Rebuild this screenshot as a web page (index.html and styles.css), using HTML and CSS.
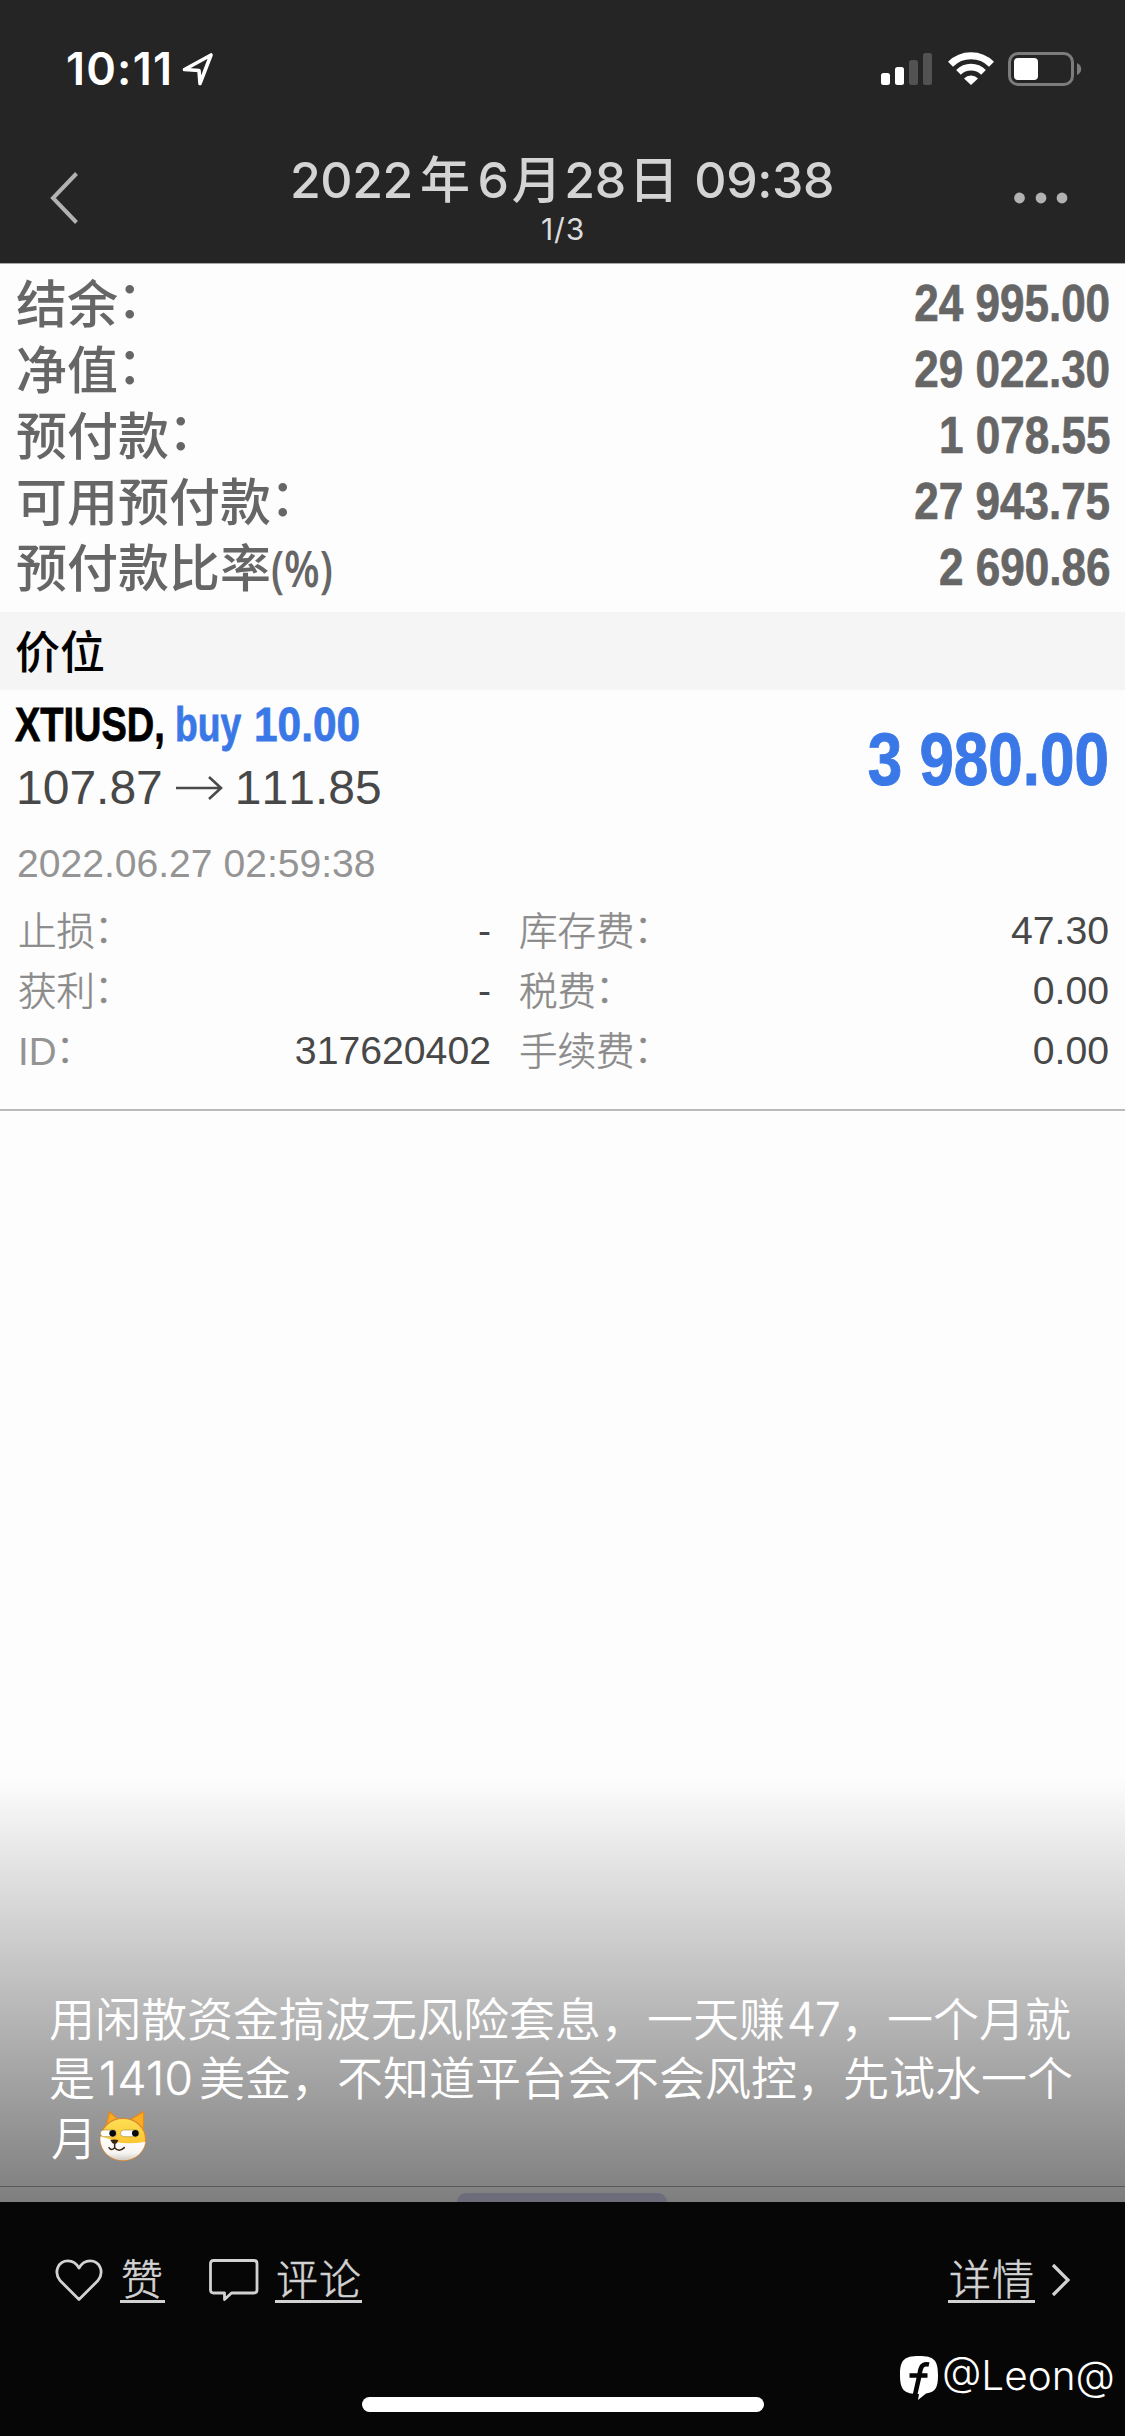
FILE: index.html
```html
<!DOCTYPE html>
<html lang="zh-CN">
<head>
<meta charset="utf-8">
<title>2022年6月28日 09:38</title>
<link rel="stylesheet" href="styles.css">
</head>
<body>
<div class="screen">
  <header class="header">
    <div class="status">
      <div class="status-left">
        <span class="clock">10:11</span>
        <svg class="location" viewBox="0 0 32 34" width="32" height="34"><path d="M2.5 17.5 L29 3 L18 31.5 L17 18.5 Z" fill="none" stroke="#fff" stroke-width="3.6" stroke-linejoin="round"/></svg>
      </div>
      <div class="status-right">
        <svg width="52" height="34" viewBox="0 0 52 34"><g fill="#fff"><rect x="0" y="21" width="9" height="12" rx="2.5"/><rect x="14" y="15" width="9" height="18" rx="2.5"/></g><g fill="#525252"><rect x="28" y="8" width="9" height="25" rx="2.5"/><rect x="42" y="1" width="9" height="32" rx="2.5"/></g></svg>
        <svg width="46" height="34" viewBox="0 0 46 34"><g fill="none" stroke="#fff"><path d="M2.5 12.2 A29 29 0 0 1 43.5 12.2" stroke-width="7"/><path d="M10.5 20.3 A17.7 17.7 0 0 1 35.5 20.3" stroke-width="6.6"/></g><path d="M23 33 L16 26.4 A10 10 0 0 1 30 26.4 Z" fill="#fff"/></svg>
        <svg width="74" height="34" viewBox="0 0 74 34"><rect x="1.5" y="1.5" width="63" height="31" rx="8.5" fill="none" stroke="#7c7c7c" stroke-width="3"/><rect x="6" y="6" width="24" height="22" rx="4" fill="#fff"/><path d="M69 11 Q73.2 13 73.2 17 Q73.2 21 69 23 Z" fill="#7c7c7c"/></svg>
      </div>
    </div>
    <div class="nav">
      <svg class="back" width="30" height="54" viewBox="0 0 30 54"><path d="M26.500 2.500 L3 27 L26.500 51.500" fill="none" stroke="#b2b2b2" stroke-width="4"/></svg>
      <div class="heading">
        <div class="title">2022<span class="gap">年</span>6<span class="gap-s">月</span>28<span class="gap-s">日</span> 09:38</div>
        <div class="count">1/3</div>
      </div>
      <svg class="more" width="54" height="12" viewBox="0 0 54 12"><g fill="#b2b2b2"><circle cx="5.5" cy="6" r="5.4"/><circle cx="27" cy="6" r="5.4"/><circle cx="48" cy="6" r="5.4"/></g></svg>
    </div>
  </header>

  <main class="photo">
    <section class="summary">
      <div class="row"><span class="label">结余<span class="colon">：</span></span><span class="num">24 995.00</span></div>
      <div class="row"><span class="label">净值<span class="colon">：</span></span><span class="num">29 022.30</span></div>
      <div class="row"><span class="label">预付款<span class="colon">：</span></span><span class="num">1 078.55</span></div>
      <div class="row"><span class="label">可用预付款<span class="colon">：</span></span><span class="num">27 943.75</span></div>
      <div class="row"><span class="label">预付款比率<span class="pct">(%)</span></span><span class="num">2 690.86</span></div>
    </section>
    <h2 class="band">价位</h2>
    <section class="trade">
      <div class="trade-top">
        <div class="deal">
          <div class="symbol"><span class="sym">XTIUSD,</span><span class="buy">buy</span><span class="lots">10.00</span></div>
          <div class="prices"><span>107.87</span><svg width="48" height="26" viewBox="0 0 48 26"><path d="M1 13 H46 M34 2 L46 13 L34 24" fill="none" stroke="#4a4a4a" stroke-width="2.6"/></svg><span>111.85</span></div>
        </div>
        <div class="profit">3 980.00</div>
      </div>
      <div class="date">2022.06.27 02:59:38</div>
      <div class="details">
        <span class="k">止损<span class="colon">：</span></span><span class="v">-</span><span class="k second">库存费<span class="colon">：</span></span><span class="v">47.30</span>
        <span class="k">获利<span class="colon">：</span></span><span class="v">-</span><span class="k second">税费<span class="colon">：</span></span><span class="v">0.00</span>
        <span class="k"><span class="latin">ID</span><span class="colon">：</span></span><span class="v">317620402</span><span class="k second">手续费<span class="colon">：</span></span><span class="v">0.00</span>
      </div>
    </section>
    <div class="blank"></div>
    <section class="caption">
      <p class="caption-text">用闲散资金搞波无风险套息，一天赚<span class="d47">47</span>，一个月就<br>是<span class="d1410">1410</span>美金，不知道平台会不会风控，先试水一个<br><span class="moon">月</span><svg class="doge" width="50" height="52" viewBox="0 0 150 156">
        <defs>
          <linearGradient id="fur" x1="0" y1="0" x2="0" y2="1"><stop offset="0" stop-color="#ffdf55"/><stop offset="1" stop-color="#f9b51c"/></linearGradient>
          <linearGradient id="muzzle" x1="0" y1="0" x2="0" y2="1"><stop offset="0" stop-color="#fff"/><stop offset=".65" stop-color="#f7f5f2"/><stop offset="1" stop-color="#c9c2bb"/></linearGradient>
          <clipPath id="head"><ellipse cx="78" cy="88" rx="68" ry="63"/></clipPath>
        </defs>
        <path d="M27 48 L38 6 L66 30 Z M98 30 L140 5 L139 60 Z" fill="#f9ae22" stroke="#e68a22" stroke-width="4" stroke-linejoin="round"/>
        <ellipse cx="78" cy="88" rx="68" ry="63" fill="url(#fur)" stroke="#d98734" stroke-width="4"/>
        <path d="M8 78 Q35 86 58 96 Q90 104 147 95 V156 H8 Z" fill="url(#muzzle)" clip-path="url(#head)"/>
        <path d="M18 60 H52 Q58 60 58 70 T52 80 H18 Q10 78 10 70 T18 60 M80 60 H118 Q126 62 126 70 T118 80 H80 Q70 78 70 70 T80 60" fill="#fff" stroke="#a79230" stroke-width="2"/>
        <circle cx="47" cy="70" r="10" fill="#080808"/><circle cx="115" cy="70" r="10" fill="#080808"/>
        <path d="M40 90 Q52 87 64 90 Q62 100 53 103 Q43 99 40 90 Z" fill="#3b2512"/>
        <path d="M53 102 V113 M36 113 Q43 124 53 113 Q66 128 82 113" fill="none" stroke="#3b2512" stroke-width="4.5" stroke-linecap="round"/>
      </svg></p>
      <div class="tabbar"><div class="tab"></div></div>
    </section>
  </main>

  <footer class="footer">
    <div class="actions">
      <svg class="heart" width="48" height="42" viewBox="0 0 48 42"><path d="M24 40.500 L5 21.500 C-1.500 13 3 1.800 13 1.800 Q20 1.800 24 9 Q28 1.800 35 1.800 C45 1.800 49.500 13 43 21.500 Z" fill="none" stroke="#d2d2d2" stroke-width="2.8" stroke-linejoin="round"/></svg>
      <span class="link like">赞</span>
      <svg class="bubble" width="50" height="43" viewBox="0 0 50 43"><path d="M4.500 1.500 H45 Q48 1.500 48 4.500 V31 Q48 34 45 34 H22.500 L15.500 40.500 V34 H4.500 Q1.500 34 1.500 31 V4.500 Q1.500 1.500 4.500 1.500 Z" fill="none" stroke="#d2d2d2" stroke-width="2.8" stroke-linejoin="round"/></svg>
      <span class="link">评论</span>
      <span class="link detail">详情</span>
      <svg class="go" width="20" height="34" viewBox="0 0 20 34"><path d="M2 2 L17 17 L2 32" fill="none" stroke="#d2d2d2" stroke-width="3.200"/></svg>
    </div>
    <div class="watermark">
      <svg width="40" height="46" viewBox="0 0 40 46"><path d="M19 1 C34 1 38 5 38 20 C38 32 36 37 26 38.500 L18 45 L19 39 C4 39 0 35 0 20 C0 5 4 1 19 1 Z" fill="#fff"/><path d="M29 9.500 C22 8 20.500 12 19.500 20 L15 40 M9.500 20.500 H27.500" fill="none" stroke="#060606" stroke-width="4.600"/></svg>
      <span class="handle">@Leon@</span>
    </div>
    <div class="home"></div>
  </footer>
</div>
</body>
</html>
```
FILE: styles.css
```css
* { box-sizing: border-box; }
body { margin: 0; background: #060606; font-family: "Liberation Sans", "Noto Sans CJK SC", sans-serif; font-kerning: none; }
svg { display: block; flex: none; }
.screen { width: 1125px; height: 2436px; display: flex; flex-direction: column; overflow: hidden; }

.header { height: 264px; background: #252525; border-bottom: 1px solid #a8a8a8; font-family: Inter, "Noto Sans CJK SC", sans-serif; }
.status { height: 138px; padding: 0 43px 0 66px; display: flex; justify-content: space-between; align-items: center; }
.status-left { display: flex; align-items: center; gap: 9px; }
.clock { font-size: 45px; font-weight: 600; line-height: 54px; width: 107px; color: #fff; white-space: nowrap; letter-spacing: 1.2px; }
.status-right { display: flex; gap: 14.500px; }
.nav { height: 125px; padding: 10px 57px 0 50px; display: grid; grid-template-columns: 60px 1fr 54px; align-items: start; }
.back { margin-top: 23px; }
.more { margin-top: 44px; }
.heading { text-align: center; color: #d4d4d4; }
.title { margin-top: 1px; font-size: 50px; font-weight: 450; line-height: 62px; white-space: nowrap; letter-spacing: -0.4px; }
.gap { margin: 0 8px 0 7px; }
.gap-s { margin: 0 3px; }
.count { padding-left: 2px; font-size: 30px; line-height: 37px; font-weight: 400; color: #dcdcdc; letter-spacing: 0.8px; }

.photo { height: 1938px; background: #fdfdfd; display: flex; flex-direction: column; }
.summary { height: 348px; padding: 6px 15px 0; color: #666; }
.row { height: 66px; display: flex; justify-content: space-between; align-items: center; }
.label { font: 500 51px/60px "Noto Sans CJK SC", sans-serif; padding: 0 0 4px 1px; white-space: nowrap; }
.colon { display: inline-block; line-height: 1; margin-left: -1px; vertical-align: 0.09em; height: 0.8em; }
.pct { display: inline-block; font-weight: 600; font-family: "Open Sans", sans-serif; line-height: 50px; transform: scaleX(.81); transform-origin: left; }
.num { font-size: 51.500px; font-weight: 700; line-height: 68px; transform: scaleX(.855); transform-origin: right; -webkit-text-stroke: 0.7px #666; }
.band { margin: 0; height: 78px; padding-left: 15px; background: #f5f5f5; color: #000; font: 500 45px/75px "Noto Sans CJK SC", sans-serif; }
.trade { height: 421px; padding: 0 16px 0 15px; border-bottom: 2px solid #bababa; }
.trade-top { height: 130px; display: flex; justify-content: space-between; }
.symbol { height: 66px; padding-top: 1px; display: flex; font-size: 49px; font-weight: 700; line-height: 66px; white-space: nowrap; }
.symbol span { transform-origin: left; -webkit-text-stroke: 0.8px currentColor; }
.sym { width: 160px; transform: scaleX(.775); color: #000; }
.buy { width: 79px; transform: scaleX(.76); color: #3b78e7; }
.lots { width: 120px; transform: scaleX(.865); color: #3b78e7; }
.prices { display: flex; align-items: center; padding-left: 1px; font-size: 48px; line-height: 63px; color: #484848; }
.prices svg { margin: 0 12px 0 12px; }
.profit { padding-top: 30px; font-size: 74px; font-weight: 700; line-height: 80px; color: #3b78e7; transform: scaleX(.838); transform-origin: right; white-space: nowrap; -webkit-text-stroke: 1px #3b78e7; }
.date { height: 81px; padding: 20px 0 0 2px; font-size: 39.100px; line-height: 48px; color: #949494; }
.details { display: grid; grid-template-columns: 120px 355px 1fr 200px; grid-auto-rows: 60px; padding-left: 3px; }
.k { font: 300 38.500px/55px "Noto Sans CJK SC", sans-serif; color: #8a8a8a; white-space: nowrap; -webkit-text-stroke: 0.5px #8a8a8a; }
.latin { font-family: "Liberation Sans"; font-weight: 400; color: #949494; -webkit-text-stroke: 0; }
.second { padding-left: 26px; }
.v { font-size: 39.200px; line-height: 60px; color: #484848; text-align: right; }
.trade .v:nth-child(4n+2) { padding-right: 2px; }
.blank { height: 667px; }
.caption { height: 424px; background: linear-gradient(rgba(0,0,0,0), rgba(0,0,0,.5)); display: flex; flex-direction: column; justify-content: space-between; }
.caption-text { margin: 209px 0 0 49px; font: 350 46px/59.300px "Noto Sans CJK SC", sans-serif; color: #fff; white-space: nowrap; }
.d47, .d1410 { display: inline-block; font-family: Inter; font-weight: 300; line-height: 50px; -webkit-text-stroke: 0.5px #fff; }
.d47 { width: 56px; padding-left: 2px; letter-spacing: -1px; }
.d1410 { width: 104px; padding-left: 4px; letter-spacing: 0.4px; }
.moon { margin: 0 -1px 0 2px; }
.doge { display: inline-block; vertical-align: -7px; margin-left: 1px; }
.tabbar { height: 16px; border-top: 1px solid #595959; padding-top: 6px; }
.tab { width: 210px; height: 9px; margin-left: 457px; background: #6d6c7b; border-radius: 10px 10px 0 0; }

.footer { height: 234px; background: #060606; display: flex; flex-direction: column; align-items: center; }
.actions { width: 1125px; height: 144px; padding: 0 54px 0 55px; display: flex; align-items: flex-start; }
.link { margin-top: 49px; height: 52px; padding-left: 1px; border-bottom: 3px solid #d2d2d2; font: 300 42px/52px "Noto Sans CJK SC", sans-serif; color: #d2d2d2; letter-spacing: 1px; -webkit-text-stroke: 0.5px #d2d2d2; }
.heart, .bubble { margin-top: 57px; }
.like { width: 45px; margin-left: 17px; margin-right: 44px; }
.bubble + .link { margin-left: 16px; }
.detail { margin-left: auto; }
.go { margin: 61px 0 0 16px; }
.watermark { height: 51px; align-self: flex-end; display: flex; align-items: flex-start; margin-right: 10px; padding-top: 9px; }
.handle { margin-left: 2px; width: 173px; font: 300 40.500px/42px Inter, sans-serif; color: #fff; white-space: nowrap; }
.home { width: 402px; height: 15px; border-radius: 8px; background: #fff; }
```
